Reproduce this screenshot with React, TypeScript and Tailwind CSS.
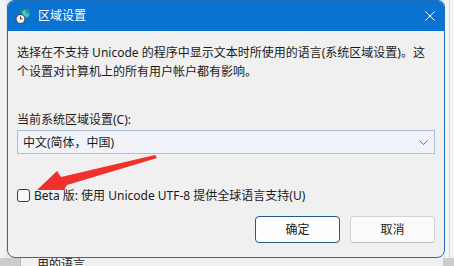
import React from "react"

const font = { fontFamily: '"Noto Sans", "Noto Sans CJK SC", sans-serif' }

function RegionIcon() {
  return (
    <svg width="16" height="16" viewBox="0 0 16 16">
      <circle cx="10.5" cy="5.5" r="4.5" fill="#2f9e6a" />
      <path d="M7 3.5 Q9 2 11 3 Q10 5 12 6 Q13.5 5 14.5 6 Q14 8.5 12 9.5 Q10 8 8.5 8 Z" fill="#4fc3f7" opacity="0.85" />
      <circle cx="5.5" cy="11" r="4.5" fill="#f4f4f4" stroke="#3a3a3a" strokeWidth="1" />
      <path d="M5.5 8.5 V11 H7.5" stroke="#3a3a3a" strokeWidth="1" fill="none" />
    </svg>
  )
}

export default function App() {
  return (
    <div className="relative w-[454px] h-[266px] overflow-hidden bg-[#ebebeb] text-[#1b1b1b]" style={font}>
      <div className="flex h-[258px]">
        {/* left strip of window behind */}
        <div className="w-[7px] h-full bg-[#f2f2f2] border-r border-[#e2e2e2]" />

        {/* dialog */}
        <div className="w-[438px] h-full flex flex-col bg-[#f0f0f0] border border-[#1f6fc0] rounded-t-[7px] rounded-b-[8px] overflow-hidden">
          <div className="h-[30px] shrink-0 flex items-center bg-[#0a72d0] pl-[7px] pr-[8px]">
            <RegionIcon />
            <span className="ml-[7px] text-[12px] text-white leading-none">区域设置</span>
            <svg className="ml-auto mr-[1px]" width="10" height="10" viewBox="0 0 10 10">
              <path d="M0.5 0.5 L9.5 9.5 M9.5 0.5 L0.5 9.5" stroke="#ffffff" strokeWidth="1" />
            </svg>
          </div>

          <div className="flex flex-col px-[9px] pt-[12px] text-[12px] leading-[19px]">
            <p className="whitespace-nowrap">选择在不支持 Unicode 的程序中显示文本时所使用的语言(系统区域设置)。这</p>
            <p className="whitespace-nowrap">个设置对计算机上的所有用户帐户都有影响。</p>

            <label className="mt-[29px]">当前系统区域设置(C):</label>
            <div className="mt-[1px] h-[24px] flex items-center justify-between bg-[#f0f4f8] border border-[#aabfd4] pl-[5px] pr-[6px]">
              <span>中文(简体，中国)</span>
              <svg width="9" height="5" viewBox="0 0 9 5">
                <path d="M0.5 0.5 L4.5 4.5 L8.5 0.5" stroke="#6b6b6b" strokeWidth="1" fill="none" />
              </svg>
            </div>

            <div className="mt-[32px] flex items-center gap-[4px]">
              <span className="w-[13px] h-[13px] rounded-[3px] border border-[#3b3b3b] bg-[#f7f7f7]" />
              <span className="whitespace-nowrap">Beta 版: 使用 Unicode UTF-8 提供全球语言支持(U)</span>
            </div>

            <div className="mt-[11px] flex justify-end gap-[10px]">
              <button className="w-[85px] h-[27px] rounded-[4px] bg-[#fdfdfd] border border-[#24598f] text-[12px]">确定</button>
              <button className="w-[85px] h-[27px] rounded-[4px] bg-[#fbfbfb] border border-[#d2d2d2] border-b-[#bdbdbd] text-[12px]">取消</button>
            </div>
          </div>
        </div>

        {/* right strip of window behind */}
        <div className="flex-1 h-full bg-[#f4f4f4] flex">
          <div className="ml-[4px] w-px h-full bg-[#d6d6d6]" />
        </div>
      </div>

      {/* window behind, lower part */}
      <div className="h-[8px] flex bg-[#cdcdcd]">
        <div className="ml-[20px] w-[423px] h-full bg-[#f0f0f0] border-l border-[#bdbdbd] overflow-hidden">
          <p className="ml-[16px] text-[12px] leading-[13px] whitespace-nowrap">用的语言。</p>
        </div>
      </div>

      {/* red annotation arrow */}
      <svg className="absolute inset-0 pointer-events-none" width="454" height="266" viewBox="0 0 454 266">
        <polygon
          points="37,190 57,171 61,177 155,155 157,158 67,185 64,190"
          fill="#f0302c"
        />
      </svg>
    </div>
  )
}
